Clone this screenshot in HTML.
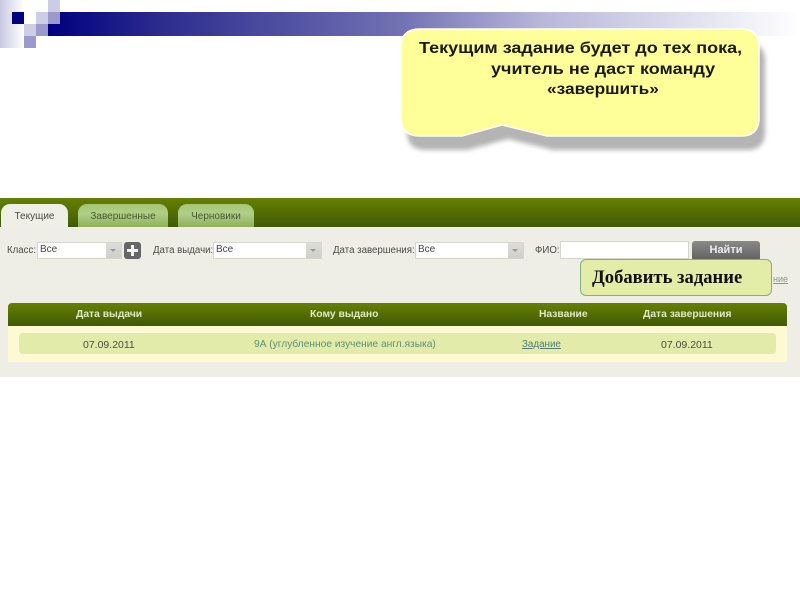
<!DOCTYPE html>
<html><head><meta charset="utf-8">
<style>
html,body{margin:0;padding:0;background:#fff}
body{width:800px;height:600px;position:relative;overflow:hidden;font-family:"Liberation Sans","DejaVu Sans",sans-serif}
.a{position:absolute}
.t{position:absolute;white-space:nowrap;line-height:1}
.b{filter:blur(.35px)}
.c{font-size:16px;font-weight:bold;color:#1a1a0a;transform:scaleX(1.125);transform-origin:0 0;filter:blur(.35px)}
.sel{position:absolute;height:15px;top:242px;background:#fff;border:1px solid #d6d6d0;font-size:10px;color:#444;line-height:13px;padding-left:2px}
.ar{position:absolute;right:0;top:0;width:15px;height:15px;background:linear-gradient(#dcdcd8,#cfcfcb)}
.ar:after{content:"";position:absolute;left:4px;top:6px;border-left:3.5px solid transparent;border-right:3.5px solid transparent;border-top:3px solid #999}
.lab{font-size:9.7px;color:#4c4c48;top:246px;filter:blur(.35px)}
.tab{position:absolute;top:204px;height:23px;border-radius:9px 9px 0 0;background:linear-gradient(#a4c474,#b2cf88 40%,#8fb05a);text-align:center;font-size:10px;color:#4a5a38;line-height:26px}
.th{font-size:10.3px;font-weight:bold;color:#dfe8c4;top:310px;filter:blur(.35px)}
.td{font-size:10.5px;top:340px;filter:blur(.3px)}
</style></head>
<body>
<!-- decoration -->
<div class="a" style="left:0;top:0;width:24px;height:48px;background:linear-gradient(90deg,#c8c8e2,#fff)"></div>
<div class="a" style="left:48px;top:12px;width:752px;height:24px;background:linear-gradient(90deg,#000080 0%,#2c2c8e 15%,#7272b4 47%,#b5b5d8 65%,#fff 100%)"></div>
<div class="a" style="left:12px;top:12px;width:12px;height:12px;background:#000080"></div>
<div class="a" style="left:48px;top:0;width:12px;height:12px;background:#ccccE4"></div>
<div class="a" style="left:36px;top:12px;width:12px;height:12px;background:#cdcde6"></div>
<div class="a" style="left:48px;top:12px;width:12px;height:12px;background:#9a9acc"></div>
<div class="a" style="left:24px;top:24px;width:12px;height:12px;background:#cdcde6"></div>
<div class="a" style="left:36px;top:24px;width:12px;height:12px;background:#9a9acc"></div>
<div class="a" style="left:24px;top:36px;width:12px;height:12px;background:#9a9acc"></div>

<!-- callout -->
<svg class="a" style="left:380px;top:10px" width="420" height="170" viewBox="380 10 420 170">
<defs><filter id="b" x="-10%" y="-10%" width="120%" height="130%"><feGaussianBlur stdDeviation="2.5"/></filter></defs>
<path d="M420 29H741Q759 29 759 47V118Q759 136 741 136H547L502 125L462 136H420Q401 136 401 118V47Q401 29 420 29Z" fill="#b4b4b4" transform="translate(6 14)" filter="url(#b)"/>
<path d="M420 29H741Q759 29 759 47V118Q759 136 741 136H547L502 125L462 136H420Q401 136 401 118V47Q401 29 420 29Z" fill="#ffff99" stroke="#fff" stroke-width="1.5"/>
</svg>
<div class="t c" style="left:419px;top:41px">Текущим задание будет до тех пока,</div>
<div class="t c" style="left:491px;top:62px">учитель не даст команду</div>
<div class="t c" style="left:547px;top:82px;transform:scaleX(1.08)">«завершить»</div>

<!-- app -->
<div class="a" style="left:0;top:198px;width:800px;height:179px;background:#eeeee7"></div>
<div class="a" style="left:0;top:198px;width:800px;height:29px;background:linear-gradient(#668000,#3f5a08)"></div>
<div class="tab" style="left:1px;width:67px;background:#efefe8;color:#4c4c48;height:24px">Текущие</div>
<div class="tab" style="left:78px;width:90px">Завершенные</div>
<div class="tab" style="left:178px;width:76px">Черновики</div>

<div class="t lab" style="left:7px">Класс:</div>
<div class="sel" style="left:37px;width:81px">Все<span class="ar"></span></div>
<div class="a" style="left:124px;top:242px;width:17px;height:17px;background:#666;border-radius:3px"></div>
<div class="a" style="left:127px;top:249px;width:11px;height:3px;background:#f2f2f2"></div>
<div class="a" style="left:131px;top:245px;width:3px;height:11px;background:#f2f2f2"></div>
<div class="t lab" style="left:153px">Дата выдачи:</div>
<div class="sel" style="left:213px;width:105px">Все<span class="ar"></span></div>
<div class="t lab" style="left:333px">Дата завершения:</div>
<div class="sel" style="left:415px;width:105px">Все<span class="ar"></span></div>
<div class="t lab" style="left:535px">ФИО:</div>
<div class="a" style="left:560px;top:241px;width:127px;height:16px;background:#fff;border:1px solid #d6d6d0"></div>
<div class="a" style="left:692px;top:241px;width:68px;height:20px;border-radius:3px;background:linear-gradient(#8a8a8a,#5f5f5f);color:#ececec;font-size:11px;font-weight:bold;text-align:center;line-height:19px">Найти</div>

<div class="t b" style="left:773px;top:275px;font-size:9px;color:#8a9a80;text-decoration:underline">ние</div>
<div class="a" style="left:580px;top:259px;width:190px;height:35px;background:#e3eda8;border:1px solid #7fb27f;border-radius:6px"></div>
<div class="t b" style="left:592px;top:269px;font-family:'Liberation Serif','DejaVu Serif',serif;font-size:18.6px;font-weight:bold;color:#111">Добавить задание</div>

<!-- table -->
<div class="a" style="left:8px;top:303px;width:779px;height:23px;border-radius:4px 4px 0 0;background:linear-gradient(#668000,#3f5a08)"></div>
<div class="t th" style="left:76px">Дата выдачи</div>
<div class="t th" style="left:310px">Кому выдано</div>
<div class="t th" style="left:539px">Название</div>
<div class="t th" style="left:643px">Дата завершения</div>
<div class="a" style="left:8px;top:326px;width:779px;height:36px;background:#fdf9d2"></div>
<div class="a" style="left:19px;top:333px;width:757px;height:21px;background:#e3ebaa;border-radius:4px"></div>
<div class="t td" style="left:83px;color:#4c4c40">07.09.2011</div>
<div class="t td" style="left:254px;font-size:10.2px;color:#5f9078">9А (углубленное изучение англ.языка)</div>
<div class="t td" style="left:522px;font-size:9.8px;color:#4f7f74;text-decoration:underline">Задание</div>
<div class="t td" style="left:661px;color:#4c4c40">07.09.2011</div>
</body></html>
